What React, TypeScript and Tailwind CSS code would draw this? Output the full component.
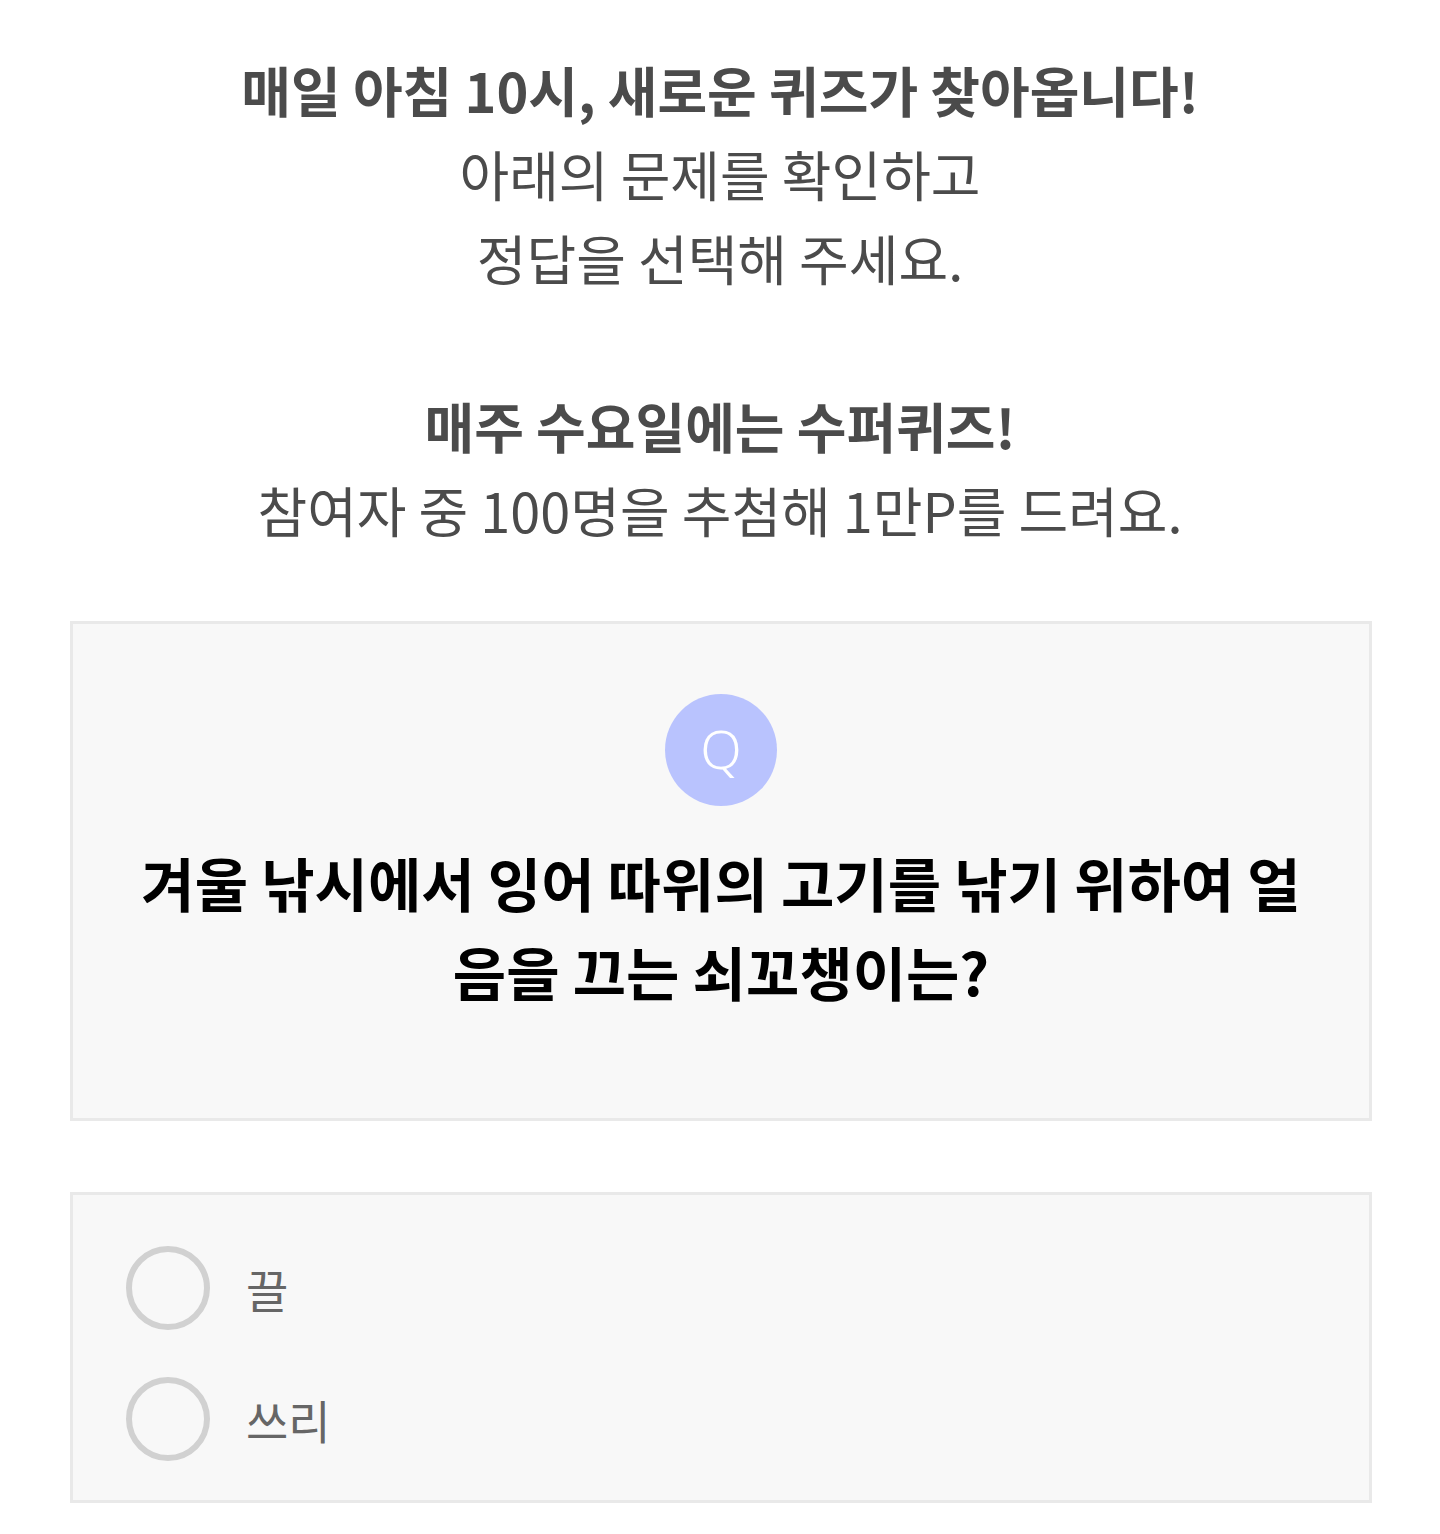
const font = "font-['Noto_Sans_CJK_KR','Noto_Sans',sans-serif]"

const options = ["끌", "쓰리"]

export default function App() {
  return (
    <div className={`min-h-[1534px] bg-white ${font}`}>
      {/* INTRO */}
      <div className="pt-12 text-center text-[54px] leading-[84px] text-[#4b4b4b]">
        <p className="font-bold">매일 아침 10시, 새로운 퀴즈가 찾아옵니다!</p>
        <p>아래의 문제를 확인하고</p>
        <p>정답을 선택해 주세요.</p>
        <p className="mt-[84px] font-bold">매주 수요일에는 수퍼퀴즈!</p>
        <p>참여자 중 100명을 추첨해 1만P를 드려요.</p>
      </div>

      <div className="ml-[70px] mr-[68px] mt-[69px]">
        {/* QUESTION */}
        <div className="flex flex-col items-center border-[3px] border-[#e9e9e9] bg-[#f8f8f8] px-[60px] pb-[102px] pt-[70px]">
          <div className="flex h-[112px] w-[112px] items-center justify-center rounded-full bg-[#b9c3fe] pb-[4px] font-['Noto_Sans',sans-serif] text-[54px] font-light leading-none text-white">
            Q
          </div>
          <p className="mt-[32px] text-center text-[58px] font-bold leading-[89px] text-black">
            겨울 낚시에서 잉어 따위의 고기를 낚기 위하여 얼음을 끄는 쇠꼬챙이는?
          </p>
        </div>

        {/* OPTIONS */}
        <div className="mt-[71px] flex flex-col gap-[47px] border-[3px] border-[#e9e9e9] bg-[#f8f8f8] pb-[39px] pl-[53px] pt-[51px]">
          {options.map((label) => (
            <label key={label} className="flex items-center gap-[36px]">
              <span className="h-[84px] w-[84px] rounded-full border-[6px] border-[#d1d1d1]" />
              <span className="text-[46px] leading-none text-[#666]">{label}</span>
            </label>
          ))}
        </div>
      </div>
    </div>
  )
}
